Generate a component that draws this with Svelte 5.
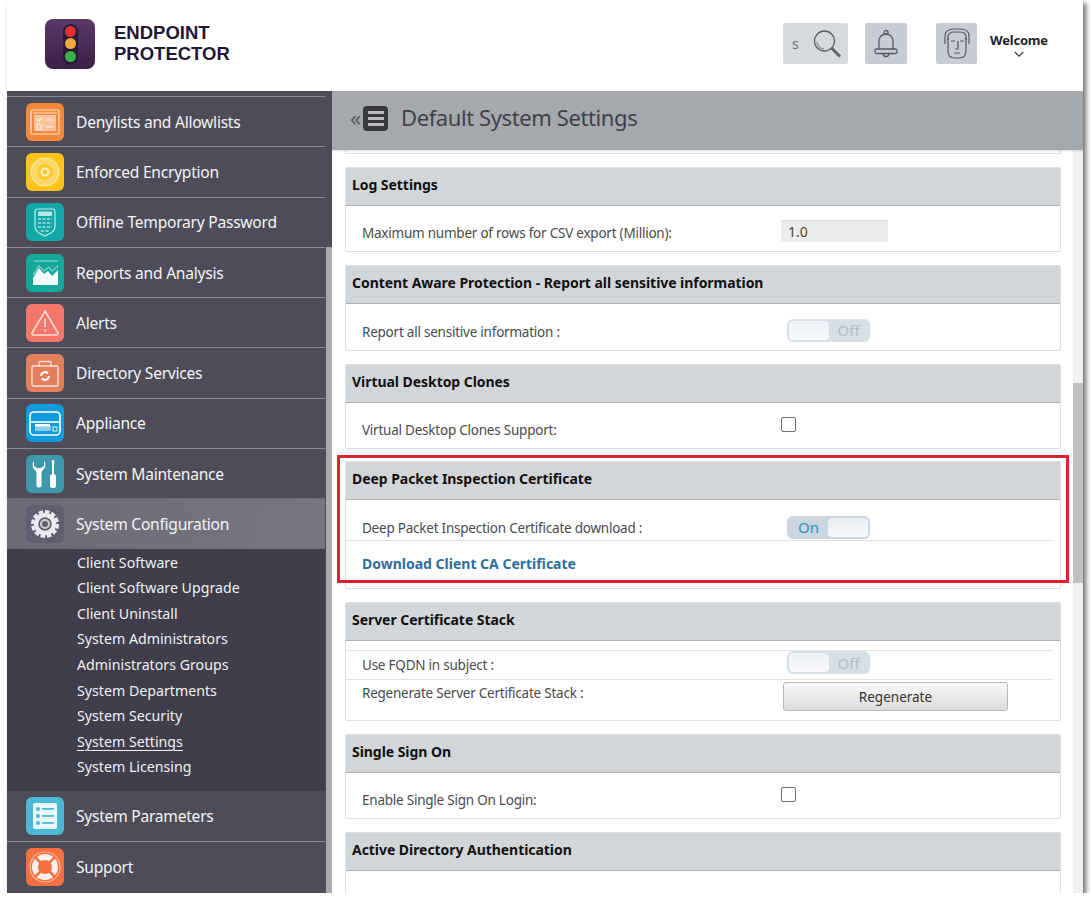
<script lang="ts">
    // entradas do menu lateral, antes e depois do submenu aberto
    const topItems = [
        { name: "Denylists and Allowlists", icon: "deny", color: "#f0893a" },
        { name: "Enforced Encryption", icon: "encrypt", color: "#fcc419" },
        { name: "Offline Temporary Password", icon: "otp", color: "#12a8a8" },
        { name: "Reports and Analysis", icon: "reports", color: "#14a99a" },
        { name: "Alerts", icon: "alerts", color: "#f4776b" },
        { name: "Directory Services", icon: "directory", color: "#e47f5c" },
        { name: "Appliance", icon: "appliance", color: "#0f9bdc" },
        { name: "System Maintenance", icon: "maint", color: "#3d98ab" },
        { name: "System Configuration", icon: "config", color: "#5f5e6e", active: true },
    ];

    const subItems = [
        "Client Software",
        "Client Software Upgrade",
        "Client Uninstall",
        "System Administrators",
        "Administrators Groups",
        "System Departments",
        "System Security",
        "System Settings",
        "System Licensing",
    ];

    const bottomItems = [
        { name: "System Parameters", icon: "params", color: "#4cb8d4" },
        { name: "Support", icon: "support", color: "#f4703f" },
    ];
</script>

{#snippet navIcon(icon: string)}
    <svg viewBox="0 0 38 38" width="38" height="38" fill="none" stroke="#fff" stroke-width="1.2" stroke-opacity="0.75">
        {#if icon === "deny"}
            <rect x="5" y="7" width="28" height="24" rx="1.5" />
            <rect x="8" y="12" width="22" height="16" fill="#fff" fill-opacity="0.5" stroke="none" />
            <path d="M7 10h24M11 16l2 2 3-3M20 17h7M20 24h7" />
            <circle cx="13" cy="24" r="2.5" />
        {:else if icon === "encrypt"}
            <circle cx="19" cy="19" r="14" fill="#fff" fill-opacity="0.35" stroke-dasharray="2 1" />
            <circle cx="19" cy="19" r="8" fill="#fcc419" fill-opacity="0.7" stroke="none" />
            <circle cx="19" cy="19" r="3.5" stroke-width="2" />
        {:else if icon === "otp"}
            <path d="M12 6h14q3 0 3 3v14q0 5-5 7.500l-5 2.500-5-2.500q-5-2.500-5-7.500V9q0-3 3-3z" />
            <rect x="12" y="8.500" width="14" height="4.500" fill="#fff" fill-opacity="0.7" stroke="none" />
            <path d="M12 16h14M12 20h14M12 24h14M15 28h8" stroke-dasharray="3 1.500" stroke-width="1.800" stroke-opacity="0.5" />
        {:else if icon === "reports"}
            <path d="M8 7h24" stroke-opacity="0.5" />
            <path d="M7 31v-7l6-10 5 6 4-3 4 5 6-6v15z" fill="#fff" fill-opacity="0.95" stroke="none" />
            <path d="M7 21l6-9 5 5 5-4 3 4 6-5" stroke-opacity="0.5" />
        {:else if icon === "alerts"}
            <path d="M19 7L32 29a1.500 1.500 0 0 1-1 2H7a1.500 1.500 0 0 1-1-2z" stroke-width="1.600" />
            <path d="M19 15v8M19 25.500v2" stroke-width="1.800" />
        {:else if icon === "directory"}
            <rect x="6" y="12" width="26" height="20" rx="1.500" stroke-width="1.400" />
            <path d="M13 12V9q0-1.500 1.500-1.500h9Q25 7.500 25 9v3" stroke-width="1.400" />
            <path d="M15 22a4 4 0 0 1 7-2.500M23 22a4 4 0 0 1-7 2.500" stroke-width="2" stroke-opacity="1" />
        {:else if icon === "appliance"}
            <rect x="4" y="8" width="30" height="23" rx="4" stroke-width="1.600" stroke-opacity="1" />
            <path d="M4 18h30" stroke-width="1.600" stroke-opacity="1" />
            <rect x="9" y="21" width="16" height="6" fill="#fff" fill-opacity="0.5" stroke="none" />
            <rect x="9" y="20" width="15" height="2.500" fill="#fff" stroke="none" />
            <rect x="27" y="23" width="4" height="4" />
        {:else if icon === "maint"}
            <path d="M8 6C6 8 6 13 9 15l1.500 2v13a2.500 2.500 0 0 0 5 0V17l1.500-2c3-2 3-7 1-9v5l-3 2h-4l-3-2z" fill="#fff" stroke="none" />
            <circle cx="27" cy="6.500" r="1.500" fill="#fff" stroke="none" />
            <rect x="26" y="7" width="2" height="13" fill="#fff" stroke="none" />
            <rect x="24" y="19" width="6" height="14" rx="2.500" fill="#fff" stroke="none" />
        {:else if icon === "config"}
            <circle cx="19" cy="19" r="12.500" stroke="#ecebef" stroke-width="3" stroke-dasharray="4.500 2" stroke-opacity="1" />
            <circle cx="19" cy="19" r="9" stroke="#ecebef" stroke-width="4.500" stroke-opacity="1" />
            <circle cx="19" cy="19" r="4" stroke="#ecebef" stroke-width="2" stroke-opacity="0.8" />
        {:else if icon === "params"}
            <rect x="7" y="6" width="24" height="26" rx="2" fill="#fff" fill-opacity="0.88" stroke="none" />
            <g fill="#4cb8d4" stroke="none">
                <circle cx="12" cy="12" r="2" /><circle cx="12" cy="19" r="2" /><circle cx="12" cy="26" r="2" />
                <rect x="16" y="11" width="12" height="1.800" /><rect x="16" y="18" width="12" height="1.800" /><rect x="16" y="25" width="12" height="1.800" />
            </g>
        {:else if icon === "support"}
            <circle cx="19" cy="19" r="15" stroke-opacity="0.5" />
            <circle cx="19" cy="19" r="10" stroke-width="6" stroke-opacity="0.9" />
            <path d="M9 9l7 7M29 9l-7 7M9 29l7-7M29 29l-7-7" stroke="#f4703f" stroke-width="2.500" stroke-opacity="1" />
        {/if}
    </svg>
{/snippet}

{#snippet toggle(on: boolean)}
    <div class="toggle" class:on>
        {#if on}
            <span class="lbl">On</span><span class="knob"></span>
        {:else}
            <span class="knob"></span><span class="lbl">Off</span>
        {/if}
    </div>
{/snippet}

<div class="window">
    <header>
        <div class="brand">
            <div class="logo">
                <div class="light">
                    <i class="red"></i><i class="amber"></i><i class="green"></i>
                </div>
            </div>
            <div class="brand-name">ENDPOINT<br />PROTECTOR</div>
        </div>
        <div class="tools">
            <div class="tool search">
                <span>s</span>
                <svg viewBox="0 0 30 30" width="30" height="30" fill="none" stroke="#5b6068">
                    <circle cx="12.500" cy="12" r="10" stroke-width="1.300" />
                    <path d="M5 13a8 8 0 0 0 7 7" stroke="#8a8f96" stroke-width="1.500" />
                    <path d="M20 19.500l8 8" stroke-width="2.800" />
                </svg>
            </div>
            <div class="tool bell">
                <svg viewBox="0 0 28 30" width="28" height="30" fill="none" stroke="#565b63" stroke-width="1.300">
                    <circle cx="14" cy="3.500" r="2" />
                    <path d="M7 20v-8a7 7 0 0 1 14 0v8" />
                    <rect x="3" y="20" width="22" height="4.500" rx="1.500" />
                    <path d="M11 24.500a3 3 0 0 0 6 0" />
                </svg>
            </div>
            <div class="tool avatar">
                <svg viewBox="0 0 30 34" width="30" height="34" fill="none" stroke="#565b63" stroke-width="1.200">
                    <path d="M3 17V9q0-7 9-7h6q9 0 9 7v8" />
                    <path d="M6 13V9q1-4 6-4h6q5 0 6 4v4" />
                    <path d="M6 11v13q0 7 7 7h4q7 0 7-7V11" />
                    <path d="M9 14h4M18 14h4M16 14v8h-3M12 26h6" />
                </svg>
            </div>
            <div class="welcome">
                <b>Welcome</b>
                <svg viewBox="0 0 12 8" width="10" height="7" fill="none" stroke="#3a3a3a" stroke-width="1.500">
                    <path d="M1 1l5 5 5-5" />
                </svg>
            </div>
        </div>
    </header>

    <div class="body">
        <nav>
            <div class="nav-list">
                {#each topItems as item}
                    <a class="nav-item" class:active={item.active} href="#top">
                        <span class="ico" style="background:{item.color}">{@render navIcon(item.icon)}</span>
                        {item.name}
                    </a>
                {/each}
                <ul class="sub">
                    {#each subItems as s}
                        <li class:current={s === "System Settings"}>{s}</li>
                    {/each}
                </ul>
                {#each bottomItems as item}
                    <a class="nav-item" href="#top">
                        <span class="ico" style="background:{item.color}">{@render navIcon(item.icon)}</span>
                        {item.name}
                    </a>
                {/each}
            </div>
            <div class="nav-thumb"></div>
        </nav>

        <main>
            <div class="title-bar">
                <span class="back">«</span>
                <span class="menu-btn"><i></i><i></i><i></i></span>
                <h1>Default System Settings</h1>
            </div>
            <div class="scroll">
                <div class="content">
                    <div class="stub"></div>

                    <section>
                        <h2>Log Settings</h2>
                        <div class="row tall">
                            <label for="csv-rows">Maximum number of rows for CSV export (Million):</label>
                            <input id="csv-rows" class="field" value="1.0" />
                        </div>
                    </section>

                    <section>
                        <h2>Content Aware Protection - Report all sensitive information</h2>
                        <div class="row tall plus">
                            <span class="lab">Report all sensitive information :</span>
                            {@render toggle(false)}
                        </div>
                    </section>

                    <section class="tight">
                        <h2>Virtual Desktop Clones</h2>
                        <div class="row tall">
                            <span class="lab">Virtual Desktop Clones Support:</span>
                            <span class="check"></span>
                        </div>
                    </section>

                    <section>
                        <h2>Deep Packet Inspection Certificate</h2>
                        <div class="row ruled cert">
                            <span class="lab">Deep Packet Inspection Certificate download :</span>
                            {@render toggle(true)}
                        </div>
                        <div class="row link-row">
                            <a class="dl" href="#top">Download Client CA Certificate</a>
                        </div>
                    </section>

                    <section>
                        <h2>Server Certificate Stack</h2>
                        <div class="row ruled first">
                            <span class="lab">Use FQDN in subject :</span>
                            {@render toggle(false)}
                        </div>
                        <div class="row btn-row">
                            <span class="lab">Regenerate Server Certificate Stack :</span>
                            <button>Regenerate</button>
                        </div>
                    </section>

                    <section>
                        <h2>Single Sign On</h2>
                        <div class="row tall">
                            <span class="lab">Enable Single Sign On Login:</span>
                            <span class="check"></span>
                        </div>
                    </section>

                    <section>
                        <h2>Active Directory Authentication</h2>
                        <div class="row tall"></div>
                    </section>

                    <div class="highlight"></div>
                </div>
                <div class="scrollbar"><div class="thumb"></div></div>
            </div>
        </main>
    </div>
</div>

<style>
    :global(body) {
        margin: 0;
        background: #fff;
        font-family: "Noto Sans", "Open Sans", sans-serif;
    }

    .window {
        width: 1076px;
        height: 893px;
        margin-left: 7px;
        background: #fff;
        box-shadow: 3px 3px 5px rgba(60, 60, 60, 0.75);
        display: flex;
        flex-direction: column;
        overflow: hidden;
    }

    header {
        height: 91px;
        flex: none;
        display: flex;
        justify-content: space-between;
    }

    .brand {
        display: flex;
        gap: 19px;
        padding: 19px 0 0 38px;
    }

    .logo {
        width: 50px;
        height: 50px;
        border-radius: 8px;
        background: linear-gradient(#5a3768, #3b2047);
        display: flex;
        justify-content: center;
        align-items: center;
    }

    .light {
        width: 15px;
        height: 41px;
        border-radius: 8px;
        background: #2a1a38;
        display: flex;
        flex-direction: column;
        align-items: center;
        justify-content: space-around;
        padding: 2px 0;
        box-sizing: border-box;
    }

    .light i {
        width: 11px;
        height: 11px;
        border-radius: 50%;
    }

    .red { background: #e12f33; }
    .amber { background: #f2a93f; }
    .green { background: #3eae4b; }

    .brand-name {
        font: bold 18.5px/21px "Liberation Sans", sans-serif;
        color: #241733;
        margin-top: 3px;
    }

    .tools {
        display: flex;
        align-items: flex-start;
        padding: 23px 35px 0 0;
    }

    .tool {
        height: 41px;
        border-radius: 2px;
        display: flex;
        align-items: center;
        justify-content: center;
    }

    .search {
        width: 65px;
        background: #d5dadd;
        justify-content: flex-start;
        padding-left: 9px;
        box-sizing: border-box;
        gap: 13px;
        font-size: 14px;
        color: #6c7075;
    }

    .bell {
        width: 42px;
        margin-left: 17px;
        background: #c8cdd3;
    }

    .avatar {
        width: 41px;
        margin-left: 29px;
        background: #c8cdd3;
    }

    .welcome {
        width: 58px;
        margin-left: 13px;
        padding-top: 8px;
        display: flex;
        flex-direction: column;
        align-items: center;
        gap: 2px;
        font-size: 13px;
        color: #222;
    }

    .welcome b {
        letter-spacing: -0.2px;
    }

    .body {
        flex: 1;
        display: flex;
        min-height: 0;
    }

    nav {
        width: 325px;
        flex: none;
        background: #4d4c58;
        position: relative;
        overflow: hidden;
    }

    .nav-list {
        width: 318px;
        padding-top: 5px;
    }

    .nav-item {
        height: 50.3px;
        box-sizing: border-box;
        border-top: 1px solid #8b8a94;
        padding-left: 19px;
        display: flex;
        align-items: center;
        gap: 12px;
        color: #f4f4f6;
        font-size: 15.6px;
        letter-spacing: -0.25px;
        text-decoration: none;
    }

    .nav-item.active {
        background: linear-gradient(90deg, #6b6a75, #777680);
        border-top-color: #6b6a75;
    }

    .ico {
        width: 38px;
        height: 38px;
        border-radius: 6px;
        flex: none;
    }

    .ico svg {
        display: block;
    }

    .sub {
        list-style: none;
        margin: 0;
        padding: 1px 0 11px 70px;
        background: #3f3e4a;
        color: #f0f0f2;
        font-size: 14.2px;
    }

    .sub li {
        height: 25.6px;
        line-height: 25px;
    }

    .sub li.current {
        text-decoration: underline;
        text-underline-offset: 3px;
    }

    .sub + .nav-item {
        border-top: none;
    }

    .nav-thumb {
        position: absolute;
        right: 0;
        top: 156px;
        bottom: 0;
        width: 6px;
        background: #a9a9ae;
    }

    main {
        flex: 1;
        min-width: 0;
        display: flex;
        flex-direction: column;
    }

    .title-bar {
        height: 59px;
        flex: none;
        box-sizing: border-box;
        background: #a5a9ae;
        display: flex;
        align-items: center;
        padding: 0 0 4px 18px;
        color: #3f4147;
        box-shadow: 0 1px 2px rgba(0, 0, 0, 0.15);
        position: relative;
        z-index: 1;
    }

    .back {
        font-size: 22px;
        color: #54585f;
        width: 13px;
        line-height: 20px;
        margin-top: -3px;
    }

    .menu-btn {
        width: 25px;
        height: 25px;
        border-radius: 4px;
        background: #38393d;
        display: flex;
        flex-direction: column;
        justify-content: center;
        gap: 3px;
        align-items: center;
    }

    .menu-btn i {
        width: 16px;
        height: 3px;
        background: #b8babd;
    }

    h1 {
        margin: 0 0 3px 13px;
        font-size: 22px;
        font-weight: 400;
        letter-spacing: -0.4px;
    }

    .scroll {
        flex: 1;
        display: flex;
        min-height: 0;
    }

    .content {
        flex: 1;
        padding: 0 12px 0 13px;
        position: relative;
        overflow: hidden;
    }

    .stub {
        height: 3px;
        border: 1px solid #dcdcdc;
        border-top: none;
        margin-bottom: 13px;
    }

    section {
        border: 1px solid #dcdedf;
        border-radius: 2px;
        margin-bottom: 13px;
        background: #fff;
    }

    section.tight {
        margin-bottom: 12px;
    }

    h2 {
        margin: 0;
        height: 38px;
        box-sizing: border-box;
        background: #d3d6d8;
        border-bottom: 1px solid #aeb1b3;
        padding-left: 6px;
        font-size: 14px;
        line-height: 34px;
        font-weight: 700;
        letter-spacing: -0.05px;
        color: #111;
    }

    .row {
        display: flex;
        align-items: center;
        box-sizing: border-box;
        margin: 0 7px 0 0;
        padding-left: 16px;
        font-size: 13.5px;
        letter-spacing: -0.23px;
        color: #4a4a4a;
    }

    .row label,
    .row .lab {
        width: 419px;
        flex: none;
    }

    .tall {
        height: 45px;
        padding-top: 9px;
    }

    .plus {
        height: 46px;
    }

    .ruled {
        border-bottom: 1px solid #e2e2e2;
    }

    .cert {
        height: 41px;
        padding-top: 16px;
    }

    .cert .toggle {
        margin-bottom: 2px;
    }

    .first {
        height: 30px;
        margin-top: 9px;
        border-top: 1px solid #e2e2e2;
    }

    .first .toggle {
        margin-bottom: 5px;
    }

    .link-row {
        height: 47px;
        padding-bottom: 3px;
    }

    .btn-row {
        height: 40px;
        align-items: flex-start;
    }

    .btn-row .lab {
        padding-top: 4px;
    }

    .dl {
        color: #2e6d9e;
        font-size: 14px;
        font-weight: 700;
        letter-spacing: 0;
        text-decoration: none;
    }

    .field {
        width: 107px;
        height: 22px;
        padding: 0 7px;
        box-sizing: border-box;
        background: #ececec;
        border: none;
        border-top: 1px solid #dcdcdc;
        font: 14px "Noto Sans", sans-serif;
        color: #444;
        margin-bottom: 5px;
    }

    .toggle {
        width: 83px;
        height: 23px;
        margin: 0 0 3px 6px;
        box-sizing: border-box;
        border-radius: 6px;
        background: #ccd6e0;
        padding: 2px;
        display: flex;
        align-items: center;
        font-size: 15px;
        letter-spacing: 0;
        opacity: 0.8;
    }

    .toggle.on {
        opacity: 1;
    }

    .knob {
        width: 40px;
        height: 19px;
        border-radius: 4px;
        background: linear-gradient(#e9eef4, #f7f9fb);
    }

    .lbl {
        flex: 1;
        text-align: center;
        color: #a4adb7;
    }

    .toggle.on .lbl {
        color: #2f8fbd;
    }

    .check {
        width: 13px;
        height: 13px;
        margin: 0 0 11px 0;
        border: 1px solid #6e6e6e;
        border-radius: 2px;
        background: #fff;
    }

    button {
        width: 225px;
        height: 29px;
        margin: 2px 0 0 2px;
        box-sizing: border-box;
        border: 1px solid #b8b8b8;
        border-radius: 3px;
        background: linear-gradient(#f8f8f8, #dcdcdc);
        font: 13.5px "Noto Sans", sans-serif;
        color: #333;
    }

    .highlight {
        position: absolute;
        left: 5px;
        top: 305px;
        width: 732px;
        height: 128px;
        box-sizing: border-box;
        border: 3px solid #d8242c;
    }

    .scrollbar {
        width: 10px;
        flex: none;
        background: #f1f1f1;
        position: relative;
    }

    .thumb {
        position: absolute;
        top: 233px;
        left: 0;
        right: 0;
        height: 200px;
        background: #c1c1c1;
    }
</style>
